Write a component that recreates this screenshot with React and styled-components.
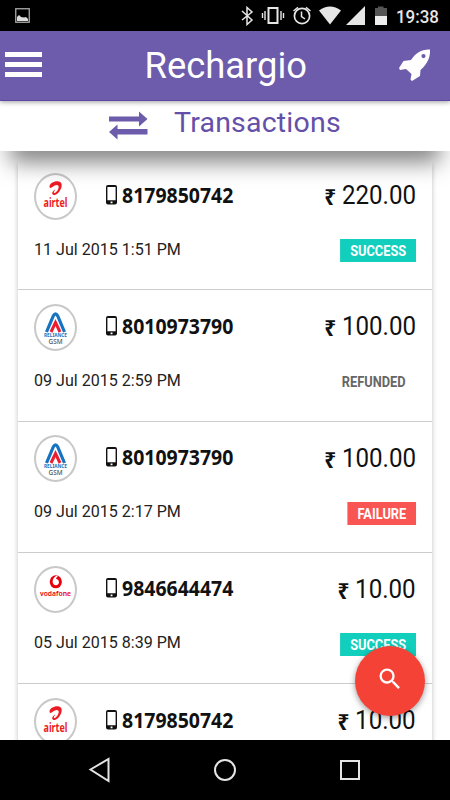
import React from "react";
import styled, { createGlobalStyle } from "styled-components";
import { MdSearch } from "react-icons/md";

const GlobalStyle = createGlobalStyle`
  * {
    box-sizing: border-box;
  }
  body {
    margin: 0;
    background: #fff;
    font-family: Roboto, "Noto Sans", sans-serif;
  }
`;

const Screen = styled.div`
  display: flex;
  flex-direction: column;
  width: 450px;
  height: 800px;
  overflow: hidden;
`;

const StatusBar = styled.div`
  display: flex;
  flex: none;
  align-items: center;
  justify-content: space-between;
  height: 31px;
  padding: 0 9px 0 15px;
  background: #000;
`;

const StatusIcons = styled.div`
  display: flex;
  align-items: center;
`;

const Clock = styled.span`
  width: 45px;
  margin-left: 9px;
  color: #e6e6e6;
  font-size: 18px;
  font-weight: 500;
  line-height: 31px;
  white-space: nowrap;
  transform: translateY(1px) scaleX(0.94);
  transform-origin: left;
`;

const Header = styled.header`
  position: relative;
  z-index: 3;
  display: flex;
  flex: none;
  align-items: center;
  justify-content: space-between;
  height: 70px;
  padding: 0 18px 0 5px;
  background: #6d5bab;
  border-bottom: 1px solid #5e48a6;
  box-shadow: 0 1px 5px rgba(0, 0, 0, 0.4);
`;

const MenuButton = styled.div`
  display: flex;
  flex-direction: column;
  gap: 5px;
  width: 37px;
  padding-bottom: 2px;
`;

const MenuLine = styled.span`
  height: 5px;
  background: #fff;
`;

const Brand = styled.h1`
  margin: 0;
  color: #fff;
  font-size: 37.5px;
  font-weight: 400;
  line-height: 66px;
  transform: translate(6px, -1px) scaleX(0.97);
`;

const SubHeader = styled.div`
  position: relative;
  z-index: 2;
  display: flex;
  flex: none;
  align-items: center;
  height: 50px;
  padding: 0 0 0 109px;
  gap: 26px;
  background: #fff;
  box-shadow: 0 21px 22px -10px rgba(0, 0, 0, 0.5);
`;

const SubTitle = styled.h2`
  margin: 0;
  color: #6450a8;
  font-size: 28.5px;
  font-weight: 400;
  letter-spacing: 0.2px;
  line-height: 44px;
  transform: translateY(-3px);
`;

const Content = styled.main`
  flex: 1;
  min-height: 0;
  padding: 8px 18px 0;
  overflow: hidden;
`;

const Card = styled.div`
  box-shadow: 0 6px 5px rgba(0, 0, 0, 0.25);
`;

const Row = styled.div`
  display: flex;
  flex-direction: column;
  height: 131.3px;
  padding: 13.5px 16px 0;
  background: #fff;
  border-bottom: 1.5px solid #ccc;
`;

const Line = styled.div`
  display: flex;
  align-items: center;
  height: ${(p) => p.$height}px;
`;

const LogoRing = styled.div`
  display: flex;
  flex: none;
  align-items: center;
  justify-content: center;
  width: 43px;
  height: 47px;
  border: 2px solid #c8c8c8;
  border-radius: 50%;
`;

const Phone = styled.div`
  display: flex;
  align-items: center;
  gap: 5px;
  margin-left: 28.5px;
  padding-bottom: 3px;
`;

const PhoneNumber = styled.span`
  color: #111;
  font-family: "Noto Sans", sans-serif;
  font-size: 20.5px;
  font-weight: 700;
  line-height: 44px;
  transform: scaleX(0.95);
  transform-origin: left;
`;

const Amount = styled.div`
  display: flex;
  align-items: center;
  gap: 6px;
  margin-left: auto;
  padding-bottom: 2px;
  color: #111;
  font-size: 25.5px;
  line-height: 44px;
  transform: scaleX(0.945);
  transform-origin: right;
`;

const Rupee = styled.span`
  font-family: "Noto Sans", sans-serif;
  font-size: 22px;
  font-weight: 700;
  transform: translateY(1px);
`;

const When = styled.span`
  padding-bottom: 2px;
  color: #222;
  font-size: 17px;
  transform: scaleX(0.945);
  transform-origin: left;
`;

const badgeColors = {
  SUCCESS: ["#12cfbd", "#fff"],
  FAILURE: ["#f95552", "#fff"],
  REFUNDED: ["transparent", "#666"],
};

const Badge = styled.span`
  height: 23px;
  margin: 2px 0 0 auto;
  padding: 0 11px;
  background: ${(p) => badgeColors[p.$status][0]};
  color: ${(p) => badgeColors[p.$status][1]};
  font-size: 14px;
  font-weight: 700;
  line-height: 24px;
  transform: scaleX(0.915);
  transform-origin: right;
`;

const SearchButton = styled.button`
  position: absolute;
  top: 646px;
  left: 355px;
  z-index: 4;
  display: flex;
  align-items: center;
  justify-content: center;
  width: 70px;
  height: 70px;
  padding: 0 0 4px;
  border: 0;
  border-radius: 50%;
  background: #f44336;
  color: #fff;
  font-size: 28px;
  box-shadow: 0 2px 6px rgba(0, 0, 0, 0.4);
`;

const NavBar = styled.nav`
  position: relative;
  display: flex;
  flex: none;
  align-items: center;
  justify-content: center;
  gap: 101px;
  height: 60px;
  background: #000;
`;

const LogoText = styled.text`
  font-family: "Noto Sans", sans-serif;
  font-weight: ${(p) => p.$weight || 700};
`;

const AirtelLogo = () => (
  <svg width="39" height="43" viewBox="0 0 39 43">
    <path
      d="M13.500 11.500 C13.500 8.500 18 6 21.500 6.200 C26 6.400 26.500 10 25 13.500 C23.500 17.500 20 20.500 17.500 20 C15 19 16.500 15.500 19.500 14.500 C17.500 16.500 17.500 18 18.500 18 C20.500 17.800 23.500 13 22.500 11 C21.500 9 18 10.500 16 12.300 C14.500 13.500 13.500 13 13.500 11.500 Z"
      fill="#ed1c24"
    />
    <LogoText x="19.500" y="32" fontSize="12" textAnchor="middle" textLength="24" lengthAdjust="spacingAndGlyphs" fill="#ed1c24">
      airtel
    </LogoText>
  </svg>
);

const RelianceLogo = () => (
  <svg width="39" height="43" viewBox="0 0 39 43">
    <path d="M10.500 26 L17.500 9.500 Q19.500 6 21.500 9.500 L28.500 26" fill="none" stroke="#1573c2" strokeWidth="3.200" />
    <path d="M15 26 L19.500 16.500 L24 26" fill="none" stroke="#ed1c2e" strokeWidth="3" />
    <LogoText x="19.500" y="31" fontSize="4.800" textAnchor="middle" textLength="23" lengthAdjust="spacingAndGlyphs" fill="#1573c2">
      RELIANCE
    </LogoText>
    <LogoText x="19.500" y="38" fontSize="6.800" $weight={500} textAnchor="middle" textLength="14" lengthAdjust="spacingAndGlyphs" fill="#555">
      GSM
    </LogoText>
  </svg>
);

const VodafoneLogo = () => (
  <svg width="39" height="43" viewBox="0 0 39 43">
    <ellipse cx="19.800" cy="13.800" rx="6.100" ry="6.500" fill="#e8000d" />
    <path d="M21 7.800 C18 8.500 16.500 11.500 16.700 14.300 C17 18.300 22.800 18.300 23 14.300 C23 11.800 21 11.300 20.300 11 C20 10 20.600 8.700 22 8.200 Z" fill="#fff" />
    <LogoText x="19.500" y="27.500" fontSize="7.800" $weight={600} textAnchor="middle" textLength="31" lengthAdjust="spacingAndGlyphs" fill="#e8000d">
      vodafone
    </LogoText>
  </svg>
);

const logos = {
  airtel: AirtelLogo,
  reliance: RelianceLogo,
  vodafone: VodafoneLogo,
};

const PhoneIcon = () => (
  <svg width="11" height="20" viewBox="0 0 11 20">
    <path
      fillRule="evenodd"
      d="M2 0 H9 Q11 0 11 2 V17.500 Q11 19.500 9 19.500 H2 Q0 19.500 0 17.500 V2 Q0 0 2 0 Z M1.400 2 V15.200 H9.600 V2 Z M4.600 16.500 V18.300 H6.500 V16.500 Z"
      fill="#111"
    />
  </svg>
);

const ExchangeIcon = () => (
  <svg width="39" height="30" viewBox="0 0 39 30">
    <path d="M0 5.500 H30 V0.500 L38.500 8 L30 15.500 V10.500 H0 Z M38.500 18 H8.500 V13.500 L0 21 L8.500 28.500 V23.500 H38.500 Z" fill="#6d5bab" />
  </svg>
);

const RocketIcon = () => (
  <svg width="34" height="34" viewBox="0 0 34 34">
    <path
      fillRule="evenodd"
      d="M32 0.500 C32.500 8 29.500 15 22.500 21 L22 27 L14 32 L12.500 30.500 L13.500 25 L8 20 L2 21 L1 19 L5.500 12 L13 11 C17.500 4 24 0 32 0.500 Z M25.500 5 A2.100 2.100 0 1 0 25.500 9.200 A2.100 2.100 0 1 0 25.500 5 Z"
      fill="#fff"
    />
  </svg>
);

const transactions = [
  { operator: "airtel", phone: "8179850742", amount: "220.00", when: "11 Jul 2015 1:51 PM", status: "SUCCESS" },
  { operator: "reliance", phone: "8010973790", amount: "100.00", when: "09 Jul 2015 2:59 PM", status: "REFUNDED" },
  { operator: "reliance", phone: "8010973790", amount: "100.00", when: "09 Jul 2015 2:17 PM", status: "FAILURE" },
  { operator: "vodafone", phone: "9846644474", amount: "10.00", when: "05 Jul 2015 8:39 PM", status: "SUCCESS" },
  { operator: "airtel", phone: "8179850742", amount: "10.00" },
];

const Transaction = ({ operator, phone, amount, when, status }) => {
  const Logo = logos[operator];
  return (
    <Row>
      <Line $height={47}>
        <LogoRing>
          <Logo />
        </LogoRing>
        <Phone>
          <PhoneIcon />
          <PhoneNumber>{phone}</PhoneNumber>
        </Phone>
        <Amount>
          <Rupee>₹</Rupee>
          {amount}
        </Amount>
      </Line>
      {status && (
        <Line $height={60}>
          <When>{when}</When>
          <Badge $status={status}>{status}</Badge>
        </Line>
      )}
    </Row>
  );
};

const Status = () => (
  <StatusBar>
    <svg width="15" height="15" viewBox="0 0 15 15">
      <rect x="0.750" y="0.750" width="13.500" height="13.500" fill="none" stroke="#aaa" strokeWidth="1.300" />
      <path d="M2 13 V9 L4 7 L6 9 L9 9.500 L11 9 L13 11 V13 Z" fill="#ddd" />
    </svg>
    <StatusIcons>
      <svg width="147" height="20" viewBox="240 6 147 20">
        <path d="M242 11 L252 20 L247 24.500 V7.500 L252 12 L242 20" fill="none" stroke="#e6e6e6" strokeWidth="1.500" />
        <rect x="268.500" y="8" width="9" height="15" fill="none" stroke="#e6e6e6" strokeWidth="2" />
        <path d="M265 11 V20 M262.500 13 V18 M281 11 V20 M283.500 13 V18" stroke="#e6e6e6" strokeWidth="1.400" />
        <circle cx="302" cy="16" r="7.600" fill="none" stroke="#e6e6e6" strokeWidth="1.700" />
        <path d="M301.500 11.500 V16.500 L305 19 M293.500 11 L298 7.300 M306 7.300 L310.500 11" fill="none" stroke="#e6e6e6" strokeWidth="1.500" />
        <path d="M319 10.500 Q330 2.500 341 10.500 L330 24.500 Z" fill="#e6e6e6" />
        <path d="M346 25 L365 6 V25 Z" fill="#e6e6e6" />
        <path d="M375 8 H378 V6.500 H383.500 V8 H387 V16 H375 Z" fill="#555" />
        <path d="M375 16 H387 V25 H375 Z" fill="#eee" />
      </svg>
      <Clock>19:38</Clock>
    </StatusIcons>
  </StatusBar>
);

export default function App() {
  return (
    <>
      <GlobalStyle />
      <Screen>
        <Status />
        <Header>
          <MenuButton>
            <MenuLine />
            <MenuLine />
            <MenuLine />
          </MenuButton>
          <Brand>Rechargio</Brand>
          <RocketIcon />
        </Header>
        <SubHeader>
          <ExchangeIcon />
          <SubTitle>Transactions</SubTitle>
        </SubHeader>
        <Content>
          <Card>
            {transactions.map((t, i) => (
              <Transaction key={i} {...t} />
            ))}
          </Card>
        </Content>
        <SearchButton>
          <MdSearch />
        </SearchButton>
        <NavBar>
          <svg width="24" height="26" viewBox="0 0 24 26">
            <path d="M2.500 12.500 L20.500 2 V24 Z" fill="none" stroke="#e4e4e4" strokeWidth="2" />
          </svg>
          <svg width="24" height="24" viewBox="0 0 24 24">
            <circle cx="12" cy="12" r="10" fill="none" stroke="#e4e4e4" strokeWidth="2" />
          </svg>
          <svg width="24" height="24" viewBox="0 0 24 24">
            <rect x="3" y="3" width="18" height="18" fill="none" stroke="#e4e4e4" strokeWidth="2" />
          </svg>
        </NavBar>
      </Screen>
    </>
  );
}
